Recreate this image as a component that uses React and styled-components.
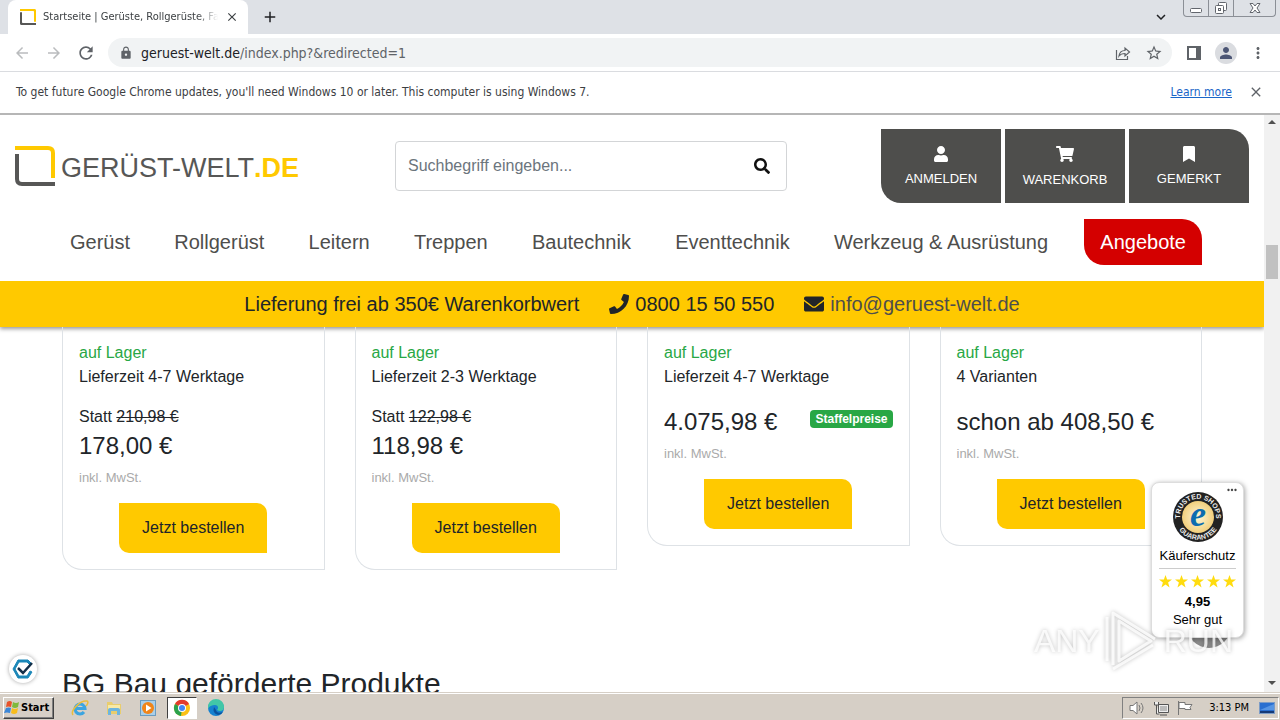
import styled, { createGlobalStyle, css } from "styled-components";
import { FaUser, FaShoppingCart, FaBookmark, FaPhone, FaEnvelope, FaSearch } from "react-icons/fa";
import { MdArrowBack, MdArrowForward, MdRefresh, MdLock, MdStarBorder, MdMoreVert, MdClose, MdAdd, MdKeyboardArrowDown, MdPerson, MdMoreHoriz } from "react-icons/md";

const GlobalStyle = createGlobalStyle`
    *{ box-sizing: border-box; }
    body{
        margin: 0;
        font-family: "Liberation Sans", Arial, sans-serif;
        font-size: 16px;
        line-height: 24px;
        color: #212529;
        background: #fff;
    }
    button, input{ font-family: inherit; font-size: inherit; }
    button{ border: 0; padding: 0; background: none; color: inherit; cursor: pointer; }
    a{ color: inherit; text-decoration: none; }
    h2, p{ margin: 0; font-weight: normal; }
    svg{ display: block; flex: none; }
`

const products = [
    { id: 1, delivery: "Lieferzeit 4-7 Werktage", old: "210,98 €", price: "178,00 €" },
    { id: 2, delivery: "Lieferzeit 2-3 Werktage", old: "122,98 €", price: "118,98 €" },
    { id: 3, delivery: "Lieferzeit 4-7 Werktage", price: "4.075,98 €", tag: "Staffelpreise" },
    { id: 4, delivery: "4 Varianten", price: "schon ab 408,50 €" },
]

const menu = ["Gerüst", "Rollgerüst", "Leitern", "Treppen", "Bautechnik", "Eventtechnik", "Werkzeug & Ausrüstung"]

/** Browser */

function Favicon({ size = 40 }){
    return(
        <svg width={size} height={size} viewBox="0 0 40 40" fill="none" strokeWidth={size < 20 ? 6 : 4}>
            <path d="M0 2H33Q38 2 38 7V32" stroke="#ffc900" />
            <path d="M2 8V33Q2 38 7 38H40" stroke="#575756" />
        </svg>
    )
}

function BrowserBar(){
    return(
        <>
            <TabStrip>
                <Tab>
                    <Favicon size={16} />
                    <TabTitle>Startseite | Gerüste, Rollgerüste, Fahrgerüste</TabTitle>
                    <button aria-label="Close tab"><MdClose size={14} /></button>
                </Tab>
                <NewTab aria-label="New tab"><MdAdd size={18} /></NewTab>
                <TabSearch aria-label="Search tabs"><MdKeyboardArrowDown size={18} /></TabSearch>
                <WindowButtons>
                    <button aria-label="Minimize">
                        <svg width="12" height="16" viewBox="0 0 12 16"><rect x="0.5" y="8.5" width="11" height="4" rx="1" fill="#fff" stroke="#62666d" /></svg>
                    </button>
                    <button aria-label="Restore">
                        <svg width="14" height="16" viewBox="0 0 14 16" fill="#fff" stroke="#62666d">
                            <rect x="4.5" y="2.5" width="8" height="8" rx="1" />
                            <rect x="1.5" y="5.5" width="8" height="8" rx="1" />
                            <rect x="4.5" y="8.5" width="2" height="2" />
                        </svg>
                    </button>
                    <button aria-label="Close">
                        <svg width="12" height="16" viewBox="0 0 12 16" fill="#fff" stroke="#62666d">
                            <path d="M1 3.5h3l2 2.500 2-2.500h3L8 8l3 4.500H8L6 10l-2 2.500H1L4 8z" />
                        </svg>
                    </button>
                </WindowButtons>
            </TabStrip>
            <Toolbar>
                <ToolButton $faded aria-label="Back"><MdArrowBack size={18} /></ToolButton>
                <ToolButton $faded aria-label="Forward"><MdArrowForward size={18} /></ToolButton>
                <ToolButton aria-label="Reload"><MdRefresh size={20} /></ToolButton>
                <AddressBar>
                    <MdLock size={14} />
                    <Url>geruest-welt.de<span>/index.php?&amp;redirected=1</span></Url>
                    <button aria-label="Share">
                        <svg width="16" height="16" viewBox="0 0 16 16" fill="none" stroke="#5f6368" strokeWidth="1.2">
                            <path d="M1.5 5v9.500h11V11M4 11c.5-4 3-5.500 6-5.500V3l4.500 4-4.500 4V8.500C7.500 8.500 5.500 9 4 11z" />
                        </svg>
                    </button>
                    <button aria-label="Bookmark"><MdStarBorder size={18} /></button>
                </AddressBar>
                <ToolButton aria-label="Side panel">
                    <svg width="14" height="14" viewBox="0 0 14 14"><path d="M1 1h12v12H1z" fill="none" stroke="#5f6368" strokeWidth="2" /><path d="M9 0h5v14H9z" fill="#5f6368" /></svg>
                </ToolButton>
                <Avatar aria-label="Profile"><MdPerson size={18} /></Avatar>
                <ToolButton aria-label="Menu"><MdMoreVert size={18} /></ToolButton>
            </Toolbar>
            <InfoBar>
                <p>To get future Google Chrome updates, you'll need Windows 10 or later. This computer is using Windows 7.</p>
                <a href="#learn">Learn more</a>
                <button aria-label="Dismiss"><MdClose size={16} /></button>
            </InfoBar>
        </>
    )
}

/** Shop */

function ShopHeader(){
    return(
        <Header>
            <HeaderTop>
                <Logo href="#home">
                    <Favicon />
                    <span>GERÜST-WELT<b>.DE</b></span>
                </Logo>
                <SearchForm>
                    <input type="text" placeholder="Suchbegriff eingeben..." aria-label="Suchbegriff" />
                    <button type="button" aria-label="Suchen"><FaSearch size={16} /></button>
                </SearchForm>
                <Actions>
                    <button><FaUser size={16} />ANMELDEN</button>
                    <button><FaShoppingCart size={18} />WARENKORB</button>
                    <button><FaBookmark size={16} />GEMERKT</button>
                </Actions>
            </HeaderTop>
            <Nav>
                {menu.map(item => <NavLink href="#menu" key={item}>{item}</NavLink>)}
                <NavLink href="#angebote" $sale>Angebote</NavLink>
            </Nav>
            <Notice>
                <span>Lieferung frei ab 350€ Warenkorbwert</span>
                <span><FaPhone size={20} />0800 15 50 550</span>
                <span><FaEnvelope size={20} /><a href="mailto:info@geruest-welt.de">info@geruest-welt.de</a></span>
            </Notice>
        </Header>
    )
}

function ProductCard({ item }){
    return(
        <Card>
            <Stock>auf Lager</Stock>
            <p>{item.delivery}</p>
            <PriceBox>
                {item.old ? <p>Statt <s>{item.old}</s></p> : null}
                <PriceRow>
                    <Price>{item.price}</Price>
                    {item.tag ? <Tag>{item.tag}</Tag> : null}
                </PriceRow>
                <Vat>inkl. MwSt.</Vat>
            </PriceBox>
            <OrderButton>Jetzt bestellen</OrderButton>
        </Card>
    )
}

function TrustedBadge(){
    return(
        <Trusted>
            <ScrollTop aria-hidden="true" />
            <TrustedCard>
                <MdMoreHoriz size={14} className="more" />
                <svg width="50" height="50" viewBox="0 0 50 50">
                    <defs>
                        <radialGradient id="gold"><stop offset="0" stopColor="#fff6d8" /><stop offset="1" stopColor="#f2cf7c" /></radialGradient>
                        <path id="arcTop" d="M7.5 29A18 18 0 1 1 42.500 29" />
                        <path id="arcBottom" d="M3 30A22.500 22.500 0 0 0 47 30" />
                    </defs>
                    <circle cx="25" cy="25" r="25" fill="#222" />
                    <circle cx="25" cy="25" r="16" fill="url(#gold)" />
                    <g fill="#eee" fontSize="7" fontWeight="bold" textAnchor="middle">
                        <text><textPath href="#arcTop" startOffset="50%">TRUSTED SHOPS</textPath></text>
                        <text><textPath href="#arcBottom" startOffset="50%">GUARANTEE</textPath></text>
                    </g>
                    <text x="25" y="34" fill="#0d6cb0" fontSize="36" fontWeight="bold" fontStyle="italic" textAnchor="middle" fontFamily="Liberation Serif, serif">e</text>
                </svg>
                <p>Käuferschutz</p>
                <Stars>
                    {[1, 2, 3, 4, 5].map(n =>
                        <svg key={n} width="13" height="13" viewBox="0 0 24 24">
                            <path d="M12 0l3 8.500h9l-7.200 5.500 2.700 9L12 17.500 4.500 23l2.700-9L0 8.500h9z" fill="currentColor" />
                        </svg>
                    )}
                </Stars>
                <b>4,95</b>
                <p>Sehr gut</p>
            </TrustedCard>
        </Trusted>
    )
}

function Watermark(){
    return(
        <WatermarkBox>
            <span>ANY</span>
            <svg width="58" height="64" viewBox="0 0 58 64" fill="none" stroke="currentColor" strokeWidth="3" strokeLinejoin="round">
                <path d="M4 8v44M10 56V4l42 26M16 12v40l32-20zM10 60l40-24" />
            </svg>
            <span>RUN</span>
        </WatermarkBox>
    )
}

/** Taskbar */

function TaskBar(){
    return(
        <Bar>
            <StartButton>
                <svg width="16" height="16" viewBox="0 0 16 16">
                    <path d="M3 2q3-2 5 0L7 7q-3-1-5 0z" fill="#e8532a" />
                    <path d="M9 2q3 2 6 0l-1 5q-3 2-6 0z" fill="#7fb93c" />
                    <path d="M2 8q3-1 5 0l-1 5q-3-1-6 0z" fill="#3b87d8" />
                    <path d="M8 8q3 2 6 0l-1 5q-3 2-6 0z" fill="#f8bd1c" />
                </svg>
                Start
            </StartButton>
            <TaskButton aria-label="Internet Explorer">
                <svg width="18" height="18" viewBox="0 0 18 18" fill="none">
                    <path d="M4 9.500h10A5 5 0 1 0 13 13" stroke="#3ca5e0" strokeWidth="3" />
                    <path d="M2 16C-1 12 9 1 16 2c2 1 0 4-1 5" stroke="#e9bd3d" strokeWidth="1.5" />
                </svg>
            </TaskButton>
            <TaskButton aria-label="Explorer">
                <svg width="18" height="18" viewBox="0 0 18 18">
                    <path d="M2 3h5l1 2h8v10H2z" fill="#e9cd6d" />
                    <path d="M3 6h12v4H3z" fill="#f8e9a6" />
                    <path d="M3 16v-5q0-2 2-2h8q2 0 2 2v5h-3v-4H6v4z" fill="#6db5df" />
                </svg>
            </TaskButton>
            <TaskButton aria-label="Media Player">
                <svg width="18" height="18" viewBox="0 0 18 18">
                    <rect x="1.5" y="1.5" width="15" height="15" fill="#a9cfe9" stroke="#6a9cc0" />
                    <circle cx="9" cy="9" r="6" fill="#f08519" />
                    <path d="M7 5.500v7l5.500-3.500z" fill="#fff" />
                </svg>
            </TaskButton>
            <TaskButton $active aria-label="Chrome">
                <svg width="18" height="18" viewBox="0 0 18 18">
                    <circle cx="9" cy="9" r="8" fill="#fbc116" />
                    <path d="M9 9L2 5A8 8 0 0 1 16 5z" fill="#e33b2e" />
                    <path d="M9 9l-1 8A8 8 0 0 1 2 5z" fill="#2ba24c" />
                    <circle cx="9" cy="9" r="4" fill="#fff" />
                    <circle cx="9" cy="9" r="3" fill="#4285f4" />
                </svg>
            </TaskButton>
            <TaskButton aria-label="Edge">
                <svg width="18" height="18" viewBox="0 0 18 18">
                    <circle cx="9" cy="9" r="8" fill="#1681cf" />
                    <path d="M1 8A8 8 0 0 1 17 8c0 4-4 5-7 3 2-2 1-5-2-5-3 0-6 1-7 4z" fill="#42c7a7" />
                    <path d="M7 8q-2 6 4 8 3 0 5-3-6 2-7-2z" fill="#0b529c" />
                </svg>
            </TaskButton>
            <Tray>
                <svg width="16" height="16" viewBox="0 0 16 16" fill="#fff" stroke="#777">
                    <path d="M1 5.500h3L8 2v12l-4-3.500H1z" />
                    <path d="M10 5q2 3 0 6M12 3q4 5 0 10" fill="none" />
                </svg>
                <svg width="16" height="16" viewBox="0 0 16 16" fill="#eee" stroke="#555">
                    <path d="M5.500 4.500h10v8h-10zM7 15h7M1.500 2v3h4V2M3.500 5v9h3" />
                    <path d="M7 6h7v5H7z" fill="#bbb" stroke="none" />
                </svg>
                <svg width="16" height="16" viewBox="0 0 16 16" fill="#fff" stroke="#777">
                    <path d="M1.500 1v14M2 2.500h6v2h7l-2 3 1 2H8v-1H2z" />
                </svg>
                <time>3:13 PM</time>
                <svg width="16" height="14" viewBox="0 0 16 14">
                    <rect x="0.5" y="1.5" width="15" height="11" fill="#2a6fd0" stroke="#7c9cc7" />
                    <path d="M1 9L15 3v6z" fill="#5795e4" />
                    <path d="M1 10h14v2H1z" fill="#163a77" />
                </svg>
            </Tray>
        </Bar>
    )
}

function App(){
    return(
        <Screen>
            <GlobalStyle />
            <BrowserBar />
            <Viewport>
                <Page>
                    <ShopHeader />
                    <Main>
                        <CardGrid>
                            {products.map(item => <ProductCard key={item.id} item={item} />)}
                        </CardGrid>
                        <Heading>BG Bau geförderte Produkte</Heading>
                    </Main>
                    <Consent aria-label="Cookie-Einstellungen">
                        <svg width="22" height="20" viewBox="0 0 22 20">
                            <path d="M6 1h10l4 4-2 1-3-3H7L3 10l4 7h8l3-5 2 1-4 6H6L1 10z" fill="#1b87b8" stroke="#1b87b8" />
                            <path d="M6 9l5 5L20 4" fill="none" stroke="#132f49" strokeWidth="2.5" />
                        </svg>
                    </Consent>
                    <TrustedBadge />
                    <Watermark />
                </Page>
                <ScrollBar aria-hidden="true">
                    <svg width="8" height="4" viewBox="0 0 8 4"><path d="M0 4l4-4 4 4z" fill="#505050" /></svg>
                    <ScrollThumb />
                    <svg width="8" height="4" viewBox="0 0 8 4"><path d="M0 0l4 4 4-4z" fill="#505050" /></svg>
                </ScrollBar>
            </Viewport>
            <TaskBar />
        </Screen>
    )
}

/** Styles */
const uiFont = css`
    font-family: "DejaVu Sans Condensed", Tahoma, "DejaVu Sans", sans-serif;
`

const Screen = styled.div`
    height: 100vh;
    display: flex;
    flex-direction: column;
    overflow: hidden;
`

const TabStrip = styled.div`
    ${uiFont}
    height: 34px;
    flex: none;
    display: flex;
    align-items: center;
    padding: 0 4px 0 8px;
    background: #dee1e6;
    color: #3c4043;
`

const Tab = styled.div`
    width: 240px; height: 34px;
    display: flex;
    align-items: center;
    gap: 7px;
    padding: 0 9px 0 12px;
    border-radius: 8px 8px 0 0;
    background: #fff;
    font-size: 11px;
`

const TabTitle = styled.span`
    flex: 1;
    overflow: hidden;
    white-space: nowrap;
    mask-image: linear-gradient(to right, #000 88%, transparent);
`

const NewTab = styled.button`
    margin-left: 13px;
    color: #202124;
`

const TabSearch = styled.button`
    margin-left: auto;
    color: #202124;
`

const WindowButtons = styled.div`
    align-self: flex-start;
    display: flex;
    height: 17px;
    margin-left: 13px;
    border: 1px solid #8b8f96;
    border-top: 0;
    border-radius: 0 0 4px 4px;
    >button{
        width: 25px;
        display: flex;
        justify-content: center;
        border-right: 1px solid #8b8f96;
    }
    >button:last-child{
        width: 41px;
        border-right: 0;
    }
`

const Toolbar = styled.div`
    ${uiFont}
    height: 38px;
    flex: none;
    display: flex;
    align-items: center;
    padding: 0 6px;
    border-bottom: 1px solid #dadce0;
`

const ToolButton = styled.button`
    width: 32px; height: 32px;
    display: flex;
    align-items: center;
    justify-content: center;
    color: ${props => props.$faded ? "#babcbe" : "#5f6368"};
`

const AddressBar = styled.div`
    flex: 1;
    height: 29px;
    display: flex;
    align-items: center;
    gap: 14px;
    margin: 0 6px;
    padding: 0 9px 0 11px;
    border-radius: 15px;
    background: #f1f3f4;
    color: #5f6368;
`

const Url = styled.div`
    flex: 1;
    margin-left: -6px;
    font-size: 14px;
    color: #202124;
    >span{ color: #5f6368; }
`

const Avatar = styled.button`
    width: 22px; height: 22px;
    display: flex;
    align-items: center;
    justify-content: center;
    margin: 0 5px;
    border-radius: 50%;
    background: #dadce0;
    color: #4c5675;
`

const InfoBar = styled.div`
    ${uiFont}
    height: 43px;
    flex: none;
    display: flex;
    align-items: center;
    padding: 0 16px 1px;
    border-bottom: 2px solid #b6b6b6;
    font-size: 12px;
    color: #3c4043;
    >a{
        margin-left: auto;
        color: #1a66c8;
        text-decoration: underline;
    }
    >button{ margin-left: 16px; color: #5f6368; }
`

const Viewport = styled.div`
    flex: 1;
    min-height: 0;
    display: flex;
`

const Page = styled.div`
    position: relative;
    flex: 1;
    overflow: hidden;
`

const Header = styled.header`
    box-shadow: 0 2px 4px rgba(0, 0, 0, .4);
`

const HeaderTop = styled.div`
    display: grid;
    grid-template-columns: 380px 1fr 462px;
    align-items: center;
    padding-top: 14px;
`

const Logo = styled.a`
    display: flex;
    align-items: center;
    gap: 6px;
    padding-left: 15px;
    font-size: 27px;
    color: #575756;
    b{ color: #ffc900; }
    >span{ padding-top: 4px; }
`

const SearchForm = styled.form`
    height: 50px;
    display: flex;
    align-items: center;
    margin: 0 15px;
    padding: 0 16px 0 12px;
    border: 1px solid #d3d5d7;
    border-radius: 4px;
    color: #111;
    >input{
        flex: 1;
        padding: 0;
        border: 0;
        outline: 0;
    }
    >input::placeholder{ color: #6c757d; }
`

const Actions = styled.div`
    display: flex;
    justify-content: flex-end;
    gap: 4px;
    padding-right: 15px;
    >button{
        width: 120px; height: 74px;
        display: flex;
        flex-direction: column;
        align-items: center;
        justify-content: center;
        gap: 9px;
        background: #4e4e4c;
        font-size: 13px;
        color: #fff;
    }
    >button:first-child{ border-bottom-left-radius: 20px; }
    >button:last-child{ border-top-right-radius: 20px; }
`

const Nav = styled.nav`
    max-width: 1140px;
    display: flex;
    justify-content: space-between;
    margin: 0 auto;
    padding: 16px 0;
`

const NavLink = styled.a`
    padding: 11px 8px;
    font-size: 20px;
    color: #4e4e4c;
    ${props => props.$sale && css`
        padding: 11px 16px;
        border-radius: 0 20px 0 20px;
        background: #d40000;
        color: #fff;
    `}
`

const Notice = styled.div`
    height: 46px;
    display: flex;
    align-items: center;
    justify-content: center;
    gap: 30px;
    background: #ffc900;
    font-size: 20px;
    >span{
        display: flex;
        align-items: center;
        gap: 6px;
    }
    a{ color: #4e4e4c; }
`

const Main = styled.main`
    max-width: 1140px;
    margin: 0 auto;
`

const CardGrid = styled.div`
    display: grid;
    grid-template-columns: repeat(4, 1fr);
    gap: 30px;
    align-items: start;
`

const Card = styled.article`
    display: flex;
    flex-direction: column;
    padding: 14px 16px 16px;
    border: 1px solid #dee2e6;
    border-top: 0;
    border-bottom-left-radius: 20px;
`

const Stock = styled.p`
    color: #28a745;
`

const PriceBox = styled.div`
    padding: 16px 0 13px;
`

const PriceRow = styled.div`
    display: flex;
    justify-content: space-between;
    align-items: center;
    height: 34px;
`

const Price = styled.span`
    font-size: 24px;
`

const Tag = styled.span`
    height: 18px;
    margin-bottom: 6px;
    padding: 0 5px;
    border-radius: 4px;
    background: #28a745;
    font-size: 12px;
    font-weight: bold;
    line-height: 18px;
    color: #fff;
`

const Vat = styled.p`
    padding-top: 3px;
    font-size: 13px;
    color: #aaa;
`

const OrderButton = styled.button`
    width: 148px; height: 50px;
    align-self: center;
    border-radius: 0 10px 0 10px;
    background: #ffc900;
    color: #212529;
`

const Heading = styled.h2`
    margin-top: 96px;
    font-size: 30px;
    line-height: 36px;
`

const Consent = styled.button`
    position: absolute;
    left: 9px; bottom: 9px;
    width: 28px; height: 28px;
    display: flex;
    align-items: center;
    justify-content: center;
    border-radius: 50%;
    background: #fff;
    box-shadow: 0 0 4px rgba(0, 0, 0, .35);
`

const Trusted = styled.aside`
    position: absolute;
    right: 20px; bottom: 54px;
    width: 93px;
`

const ScrollTop = styled.div`
    position: absolute;
    right: 13px; bottom: -10px;
    width: 44px; height: 44px;
    border-radius: 50%;
    background: #8c8c8c;
`

const TrustedCard = styled.div`
    position: relative;
    display: flex;
    flex-direction: column;
    align-items: center;
    height: 156px;
    padding: 9px 7px;
    border: 1px solid #ddd;
    border-radius: 8px;
    background: #fff;
    box-shadow: 1px 1px 5px rgba(0, 0, 0, .35);
    font-size: 13px;
    line-height: 18px;
    color: #000;
    .more{
        position: absolute;
        top: 0; right: 4px;
        color: #444;
    }
    >p:first-of-type{ margin-top: 5px; }
`

const Stars = styled.div`
    align-self: stretch;
    display: flex;
    justify-content: space-between;
    margin-top: 3px;
    padding: 6px 0 5px;
    border-top: 1px solid #ccc;
    color: #ffdc0f;
`

const WatermarkBox = styled.div`
    position: absolute;
    right: 31px; bottom: 19px;
    display: flex;
    align-items: center;
    gap: 3px;
    font-size: 32px;
    color: rgba(255, 255, 255, .8);
    filter: drop-shadow(0 0 2px rgba(0, 0, 0, .3));
    pointer-events: none;
`

const ScrollBar = styled.div`
    width: 16px;
    display: flex;
    flex-direction: column;
    align-items: center;
    padding: 5px 0 7px;
    background: #f1f1f1;
`

const ScrollThumb = styled.div`
    width: 12px; height: 34px;
    margin: 121px 0 auto;
    background: #c1c1c1;
`

const Bar = styled.footer`
    ${uiFont}
    height: 28px;
    flex: none;
    display: flex;
    align-items: center;
    padding: 2px 1px 0 3px;
    border-top: 1px solid #d6cfc6;
    box-shadow: inset 0 1px 0 #fff;
    background: #d6cfc6;
    font-size: 11px;
    color: #000;
`

const StartButton = styled.button`
    width: 51px; height: 22px;
    display: flex;
    align-items: center;
    gap: 1px;
    margin-right: 11px;
    border: 1px solid;
    border-color: #fff #404040 #404040 #fff;
    box-shadow: inset -1px -1px 0 #808080;
    font-size: 11px;
    font-weight: bold;
`

const TaskButton = styled.button`
    width: 30px; height: 22px;
    display: flex;
    align-items: center;
    justify-content: center;
    margin-right: 4px;
    ${props => props.$active && css`
        border: 1px solid;
        border-color: #404040 #fff #fff #404040;
        background: #fff;
    `}
`

const Tray = styled.div`
    width: 157px; height: 22px;
    display: flex;
    align-items: center;
    gap: 8px;
    margin-left: auto;
    padding: 0 3px 0 6px;
    border: 1px solid;
    border-color: #808080 #fff #fff #808080;
    >time{ margin: 0 2px 0 auto; }
`

export default App
